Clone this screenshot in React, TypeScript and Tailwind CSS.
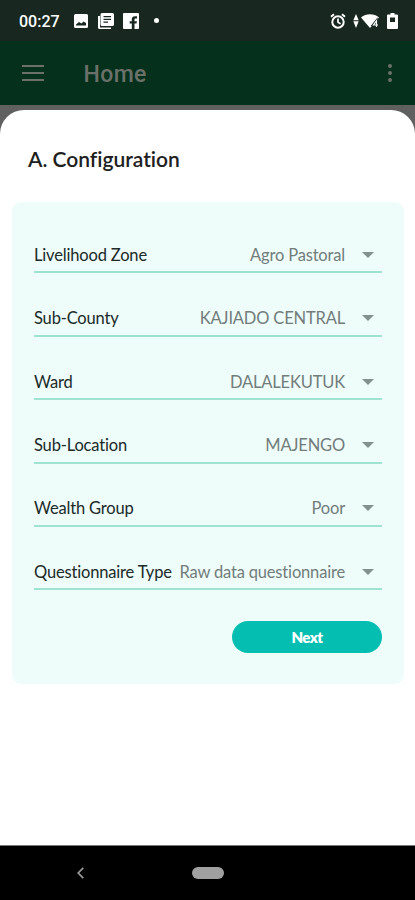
const fields = [
  { label: "Livelihood Zone", value: "Agro Pastoral" },
  { label: "Sub-County", value: "KAJIADO CENTRAL" },
  { label: "Ward", value: "DALALEKUTUK" },
  { label: "Sub-Location", value: "MAJENGO" },
  { label: "Wealth Group", value: "Poor" },
  { label: "Questionnaire Type", value: "Raw data questionnaire" },
];

const StatusBar = () => (
  <div className="flex h-[41px] shrink-0 items-center bg-[#182820] pl-[19px] pr-[17px] text-white">
    <span className="w-[42px] whitespace-nowrap pt-[2px] font-[Roboto,sans-serif] text-[16px] font-medium leading-none">00:27</span>
    {/* Notifications */}
    <svg className="ml-[13px] h-[14px] w-[14px]" viewBox="0 0 14 14" fill="currentColor">
      <path fillRule="evenodd" d="M1.5 0h11A1.5 1.5 0 0 1 14 1.5v11a1.5 1.5 0 0 1-1.5 1.5h-11A1.5 1.5 0 0 1 0 12.5v-11A1.5 1.5 0 0 1 1.5 0zM2 11.5h10V9L9.5 7.4 7.5 9.5 5 8 2 10.5z" />
    </svg>
    <svg className="ml-[10px] h-[16px] w-[16px]" viewBox="0 0 16 16" fill="currentColor">
      <path d="M0 3h2v11.5h11V16H1.5A1.5 1.5 0 0 1 0 14.5z" />
      <path fillRule="evenodd" d="M4 0h10.5A1.5 1.5 0 0 1 16 1.5v10a1.5 1.5 0 0 1-1.5 1.5H4a1.5 1.5 0 0 1-1.5-1.5v-10A1.5 1.5 0 0 1 4 0zM5.5 3v1.3h7.500V3zM5.5 5.7V7h7.500V5.700zM5.500 8.400v1.300h4.500V8.400z" />
    </svg>
    <svg className="ml-[9px] h-[16px] w-[16px]" viewBox="0 0 16 16" fill="currentColor">
      <path fillRule="evenodd" d="M1 0h14a1 1 0 0 1 1 1v14a1 1 0 0 1-1 1h-3.500v-5.500h2l.4-2.300h-2.400V6.800c0-.8.300-1.200 1.200-1.200H14V3.300h-1.900c-2.200 0-3.300 1.200-3.300 3.200v1.700H6.700v2.300h2.100V16H1a1 1 0 0 1-1-1V1a1 1 0 0 1 1-1z" />
    </svg>
    <span className="ml-[15px] h-[5px] w-[5px] rounded-full bg-white" />

    {/* System icons */}
    <svg className="ml-auto h-[16px] w-[16px]" viewBox="0 0 16 16" fill="none" stroke="currentColor">
      <circle cx="8" cy="9" r="5.700" strokeWidth="2" />
      <path d="M8 5.500V9.300l2.600 1.600" strokeWidth="1.700" />
      <path d="M1 3.800l3-2.500M15 3.800l-3-2.500" strokeWidth="2" />
    </svg>
    <svg className="ml-[7px] h-[14px] w-[6px]" viewBox="0 0 6 14" fill="currentColor">
      <path d="M3 0l2.700 6.200H.3zM3 14L.3 7.200h5.400z" />
    </svg>
    <svg className="ml-[2px] h-[14px] w-[18px]" viewBox="0 0 18 14">
      <path d="M0 3.500C5 -.8 13 -.8 18 3.500L9 14z" fill="currentColor" />
      <path d="M15.500 13V6.500L12 11h5" fill="none" stroke="#182820" strokeWidth="2.200" />
      <path d="M15.500 13V6.800L12.500 11h4.500" fill="none" stroke="currentColor" strokeWidth="1.200" />
    </svg>
    <svg className="ml-[8px] h-[16px] w-[11px]" viewBox="0 0 11 16" fill="currentColor">
      <path fillRule="evenodd" d="M3.500 0h4v1.500H10a1 1 0 0 1 1 1V15a1 1 0 0 1-1 1H1a1 1 0 0 1-1-1V2.500a1 1 0 0 1 1-1h2.500zM3 4.500V9h5V4.500z" />
    </svg>
  </div>
);

const AppBar = () => (
  <div className="flex h-[64px] shrink-0 items-center bg-[#04301c] pl-[22px] pr-[23px] text-[#6b7069]">
    <div className="flex w-[22px] flex-col gap-[5px]">
      <span className="h-[2px] bg-current" />
      <span className="h-[2px] bg-current" />
      <span className="h-[2px] bg-current" />
    </div>
    <span className="ml-[39.5px] mt-[4px] font-[Roboto,sans-serif] text-[23px] font-medium leading-[28px] tracking-[0.4px]">Home</span>
    <div className="ml-auto flex flex-col gap-[2.5px]">
      <span className="h-[4.5px] w-[4.5px] rounded-full bg-current" />
      <span className="h-[4.5px] w-[4.5px] rounded-full bg-current" />
      <span className="h-[4.5px] w-[4.5px] rounded-full bg-current" />
    </div>
  </div>
);

const App = () => {
  return (
    <div className="flex h-[900px] w-[415px] flex-col overflow-hidden bg-[#606060] font-[Lato,sans-serif]">
      <StatusBar />
      <AppBar />

      {/* Configuration sheet */}
      <main className="mt-[5px] flex-1 rounded-t-[24px] bg-white px-[12px]">
        <h1 className="ml-[16px] pt-[35px] text-[21px] font-semibold leading-[28px] tracking-[-0.02px] text-[#202020]">A. Configuration</h1>

        <section className="mr-[-1px] mt-[29px] h-[482px] rounded-[9px] bg-[#eefcfa] px-[22px] pt-[8px]">
          {fields.map((f) => (
            <div key={f.label} className="flex h-[63.4px] items-end border-b-2 border-[#a0e2d1] pb-[5.5px] text-[16.5px] leading-[22px] tracking-[-0.17px]">
              <span className="whitespace-nowrap text-[#202a28]">{f.label}</span>
              <span className="ml-auto whitespace-nowrap text-[#727c7a]">{f.value}</span>
              <svg className="mb-[8px] ml-[17px] mr-[8px] h-[6px] w-[12px]" viewBox="0 0 12 6" fill="#83918e">
                <path d="M0 0h12L6 6z" />
              </svg>
            </div>
          ))}
          <button className="ml-auto mt-[31px] block h-[32px] w-[150px] rounded-full bg-[#04bfb1] text-[15px] font-extrabold tracking-[-0.6px] text-white">Next</button>
        </section>
      </main>

      {/* Navigation bar */}
      <nav className="flex h-[55px] shrink-0 items-center border-t border-[#777] bg-black pl-[77px]">
        <svg className="h-[12px] w-[7px]" viewBox="0 0 7 12" fill="none" stroke="#999" strokeWidth="1.700">
          <path d="M6.300 .8L1.200 6l5.100 5.200" />
        </svg>
        <span className="ml-[108px] h-[12px] w-[32px] rounded-full bg-[#a0a0a0]" />
      </nav>
    </div>
  );
};

export default App;
